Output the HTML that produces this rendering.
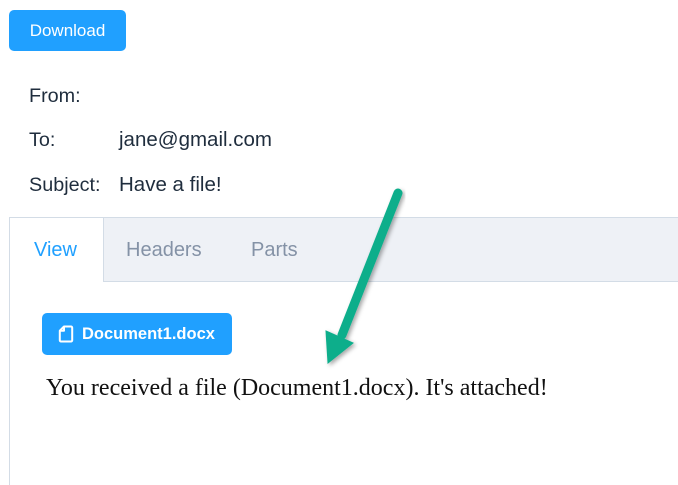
<!DOCTYPE html>
<html style="overflow:hidden"><head><style>
html,body{margin:0;width:678px;height:485px;overflow:hidden}
body{background:#fff;position:relative;font-family:"Liberation Sans",sans-serif}
.btn{position:absolute;background:#20a0ff;color:#fff;border-radius:5px;font-size:17px;display:flex;align-items:center;justify-content:center}
.l{position:absolute;left:29px;font-size:19.8px;color:#1f2d3d}
.v{position:absolute;left:119px;font-size:20.5px;color:#1f2d3d}
</style></head><body>
<div class="btn" style="left:9px;top:10px;width:117px;height:41px">Download</div>
<div class="l" style="top:85px">From:</div>
<div class="l" style="top:129px">To:</div><div class="v" style="top:128px">jane@gmail.com</div>
<div class="l" style="top:174px">Subject:</div><div class="v" style="top:173px">Have a file!</div>
<div style="position:absolute;left:9px;top:217px;width:680px;height:280px;border:1px solid #d3dce6;box-sizing:border-box"></div>
<div style="position:absolute;left:10px;top:218px;width:670px;height:63px;background:#eef1f6;border-bottom:1px solid #d3dce6"></div>
<div style="position:absolute;left:10px;top:218px;width:93px;height:64px;background:#fff;border-right:1px solid #d3dce6"></div>
<div style="position:absolute;left:34px;top:239px;font-size:20px;color:#20a0ff">View</div>
<div style="position:absolute;left:126px;top:239px;font-size:20px;color:#8492a6">Headers</div>
<div style="position:absolute;left:251px;top:239px;font-size:20px;color:#8492a6">Parts</div>
<div class="btn" style="left:42px;top:313px;width:190px;height:42px;font-size:16.5px;font-weight:bold;justify-content:flex-start;padding-left:16px;box-sizing:border-box">
<svg width="16" height="18" viewBox="0 0 16 18" style="margin-right:8px"><path d="M6 1.5H13a1.2 1.2 0 0 1 1.2 1.2V15.3a1.2 1.2 0 0 1-1.2 1.2H3a1.2 1.2 0 0 1-1.2-1.2V5.7z M6 1.5V5.7H1.8" fill="none" stroke="#fff" stroke-width="2" stroke-linejoin="round"/></svg>Document1.docx</div>
<div style="position:absolute;left:46px;top:375px;font-family:'Liberation Serif',serif;font-size:24px;color:#111">You received a file (Document1.docx). It's attached!</div>
<svg style="position:absolute;left:0;top:0" width="678" height="485">
<defs><filter id="s"><feDropShadow dx="2" dy="2" stdDeviation="2" flood-opacity="0.35"/></filter></defs>
<g filter="url(#s)" fill="#0fae8b" stroke="#0fae8b">
<line x1="398" y1="193" x2="342" y2="335" stroke-width="9" stroke-linecap="round"/>
<polygon points="326,331 353,343 328,363" stroke-width="1"/>
</g></svg>
</body></html>
